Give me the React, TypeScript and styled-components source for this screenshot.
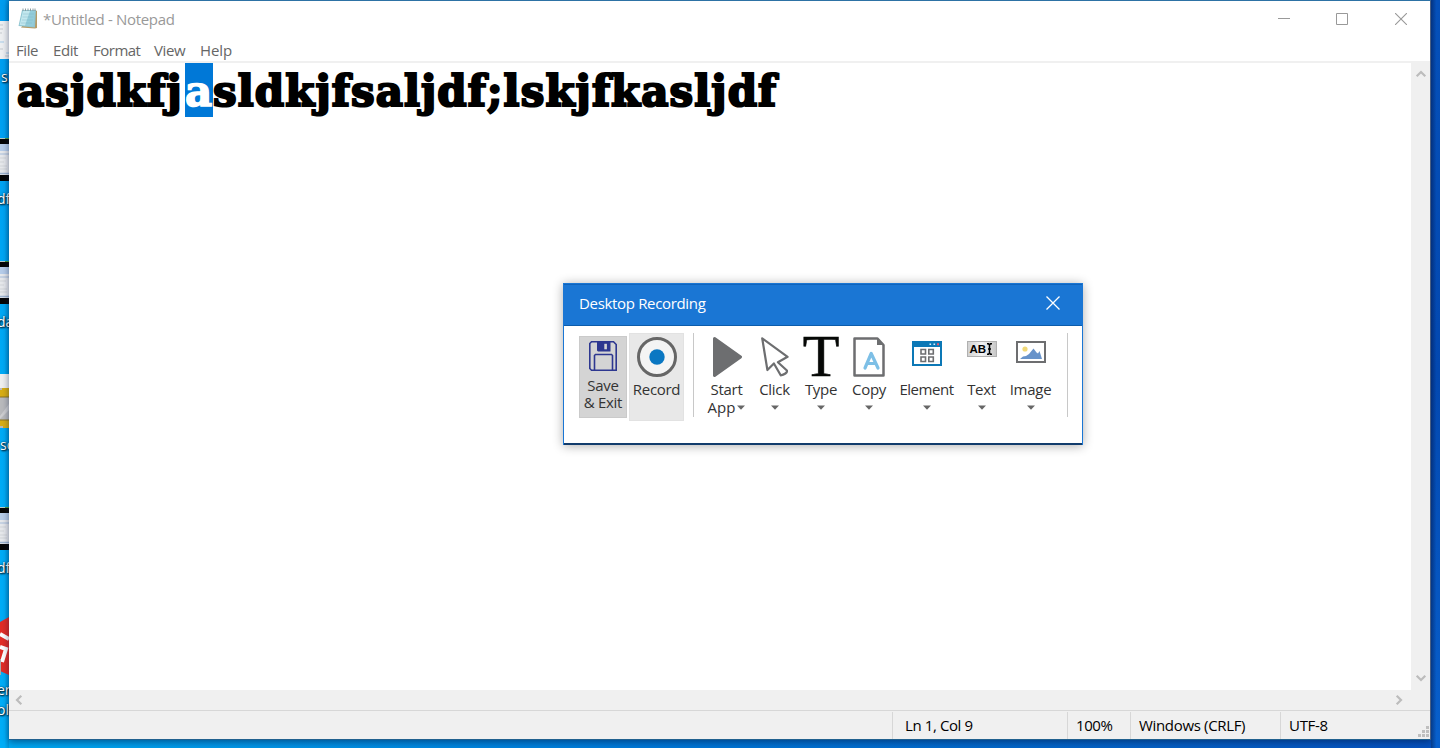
import React from "react";
import styled, { createGlobalStyle } from "styled-components";

const Global = createGlobalStyle`
  * { box-sizing: border-box; }
  body { margin: 0; overflow: hidden; font-family: "Open Sans", "Noto Sans", sans-serif; }
  svg { display: block; flex: none; }
`;

const Desktop = styled.div`
  position: relative;
  width: 1440px;
  height: 748px;
  display: grid;
  grid-template-columns: 9px 1422px 9px;
  overflow: hidden;
  background: linear-gradient(90deg, #00a8f0 0%, #0295e6 18%, #0078d7 45%, #0560c4 80%, #0550bd 100%);
`;

const IconStrip = styled.div`
  overflow: hidden;
  height: 748px;
  background: linear-gradient(90deg, transparent 50%, rgba(0, 50, 90, 0.2)), linear-gradient(#009df0, #00abf6 50%, #00aef8);
`;

const Shortcut = styled.div<{ $gap: number }>`
  margin-top: ${(p) => p.$gap}px;
  height: 70px;
  display: flex;
  flex-direction: column;
`;

const ShortcutName = styled.span<{ $top: number; $left?: number }>`
  margin: ${(p) => p.$top}px 0 0 ${(p) => p.$left ?? -3}px;
  font-size: 14px;
  line-height: 20px;
  white-space: nowrap;
  color: #fff;
  text-shadow: 1px 1px 2px #000, 0 0 2px #003050;
`;

const RightEdge = styled.div`
  height: 748px;
  background: linear-gradient(90deg, rgba(0, 15, 60, 0.45), transparent 60%), linear-gradient(#0550b9, #0348b0 50%, #0860cc);
`;

const Window = styled.div`
  height: 740px;
  display: flex;
  flex-direction: column;
  background: #fff;
  border-top: 1px solid #2d72a5;
  border-right: 1px solid #4c5f80;
  border-bottom: 1px solid #20608e;
  box-shadow: 0 2px 7px rgba(0, 20, 60, 0.5);
`;

const TitleBar = styled.div`
  height: 37px;
  display: flex;
  align-items: center;
  padding: 0 0 2px 9px;
`;

const Title = styled.span`
  margin-left: 5px;
  flex: 1;
  font-size: 15px;
  letter-spacing: -0.32px;
  color: #999;
`;

const Controls = styled.div`
  display: grid;
  grid-template-columns: 58px 59px 12px;
  padding-right: 23px;
`;

const MenuBar = styled.div`
  height: 25px;
  display: flex;
  gap: 14px;
  padding: 1px 0 0 7px;
  border-bottom: 2px solid #f0f0f0;
  font-size: 15px;
  line-height: 22px;
  color: #666;
`;

const MenuItem = styled.span<{ $w: number; $ls?: number }>`
  width: ${(p) => p.$w}px;
  letter-spacing: ${(p) => p.$ls ?? -0.4}px;
  white-space: nowrap;
`;

const Body = styled.div`
  flex: 1;
  display: grid;
  grid-template-columns: 1fr 19px;
`;

const Editor = styled.div`
  display: flex;
  align-items: flex-start;
  padding-left: 8px;
`;

const Run = styled.span<{ $w: number; $ls: number; $selected?: boolean }>`
  width: ${(p) => p.$w}px;
  height: 54px;
  font: bold 42px/58px "DejaVu Serif", serif;
  letter-spacing: ${(p) => p.$ls}px;
  white-space: nowrap;
  color: ${(p) => (p.$selected ? "#fff" : "#000")};
  background: ${(p) => (p.$selected ? "#0078d7" : "transparent")};
  -webkit-text-stroke: ${(p) => (p.$selected ? 1.5 : 2.2)}px currentColor;
`;

const VScroll = styled.div`
  display: flex;
  flex-direction: column;
  justify-content: space-between;
  align-items: center;
  padding: 7px 0 8px;
  background: #f0f0f0;
`;

const HScroll = styled.div`
  height: 20px;
  display: flex;
  justify-content: space-between;
  align-items: center;
  padding: 0 26px 1px 5px;
  background: #f0f0f0;
`;

const StatusBar = styled.div`
  height: 29px;
  display: flex;
  justify-content: flex-end;
  padding-top: 1px;
  background: #f0f0f0;
  border-top: 1px solid #d7d7d7;
`;

const StatusCell = styled.div<{ $w: number; $pad: number; $ls: number }>`
  width: ${(p) => p.$w}px;
  height: 27px;
  display: flex;
  justify-content: space-between;
  padding-left: ${(p) => p.$pad}px;
  border-left: 1px solid #d7d7d7;
  font-size: 15px;
  line-height: 26px;
  letter-spacing: ${(p) => p.$ls}px;
  white-space: nowrap;
  color: #000;
`;

const Grip = styled.div`
  align-self: flex-end;
  padding: 0 1px 2px 0;
`;

const Dialog = styled.div`
  position: absolute;
  left: 563px;
  top: 283px;
  width: 520px;
  height: 162px;
  background: #fff;
  border: 1px solid #1a76d4;
  border-bottom: 0;
  box-shadow: 0 1px 10px rgba(0, 0, 0, 0.32);
`;

const DialogHeader = styled.div`
  height: 42px;
  display: flex;
  justify-content: space-between;
  padding: 0 22px 0 15px;
  background: #1a76d4;
  border-top: 1px solid #0f63bb;
  border-bottom: 1px solid #0c5cab;
  color: #fff;
  font-size: 15px;
  line-height: 36px;
  letter-spacing: -0.33px;
`;

const CloseWrap = styled.div`
  padding-top: 11px;
`;

const Toolbar = styled.div`
  height: 119px;
  display: flex;
  align-items: flex-start;
  padding: 7px 0 0 15px;
  border-bottom: 2px solid #123c6c;
`;

const ToggleButton = styled.div<{ $w: number; $h: number; $top: number; $bg: string; $line: string }>`
  width: ${(p) => p.$w}px;
  height: ${(p) => p.$h}px;
  margin: ${(p) => p.$top}px 2px 0 0;
  display: flex;
  flex-direction: column;
  align-items: center;
  background: ${(p) => p.$bg};
  border: 1px solid ${(p) => p.$line};
`;

const Divider = styled.div<{ $l: number; $r: number }>`
  width: 1px;
  height: 84px;
  margin: 0 ${(p) => p.$r}px 0 ${(p) => p.$l}px;
  background: #c8c8c8;
`;

const Tool = styled.div<{ $w: number }>`
  width: ${(p) => p.$w}px;
  display: flex;
  flex-direction: column;
  align-items: center;
`;

const ToolIcon = styled.div<{ $h: number; $top: number }>`
  height: ${(p) => p.$h}px;
  padding-top: ${(p) => p.$top}px;
`;

const Label = styled.span<{ $ls?: number; $lh?: number }>`
  display: flex;
  align-items: center;
  gap: 2px;
  font-size: 15px;
  line-height: ${(p) => p.$lh ?? 18}px;
  height: ${(p) => p.$lh ?? 18}px;
  letter-spacing: ${(p) => p.$ls ?? -0.3}px;
  color: #333;
  white-space: nowrap;
`;

const TypeGlyph = styled.div`
  height: 47px;
  font: 60px/46px "Liberation Serif", serif;
  color: #060806;
  -webkit-text-stroke: 0.6px #060806;
`;

const Caret = () => (
  <svg width="8" height="5" viewBox="0 0 8 5"><path d="M0 0.500h8L4 4.800z" fill="#666" /></svg>
);

const Chevron = ({ dir }: { dir: "up" | "down" | "left" | "right" }) => {
  const turn = { up: 0, right: 90, down: 180, left: 270 }[dir];
  return (
    <svg width="10" height="8" viewBox="-5 -4 10 8" overflow="visible">
      <path d="M-4.300 2.300L0 -2L4.300 2.300" transform={`rotate(${turn})`} fill="none" stroke="#bcbcbc" strokeWidth="2.200" />
    </svg>
  );
};

const NotepadIcon = () => (
  <svg width="20" height="21" viewBox="0 0 20 21">
    <path d="M17 2l2 1v17l-2 0.500-14-1z" fill="#b59a66" />
    <path d="M4 2h14l-1 17.500L0.500 18z" fill="#8fc4d0" />
    <path d="M4.500 3h12.500l-1.500 15.500L1.500 17z" fill="#93ccda" />
    <path d="M5 3h7L7 17.500 1.700 17z" fill="#c2e7ee" />
    <path d="M5 6h11M4.500 9h11M4 12h11M3 15h11" stroke="#79b4c3" strokeWidth=".4" />
    <path d="M5 0.500v2.500M7.500 0.500v2.500M10 0.500v2.500M12.500 0.500v2.500M15 0.500v2.500M17 0.500v2.500" stroke="#8a9ca0" strokeWidth="1" />
  </svg>
);

const PageThumb = () => (
  <svg width="9" height="38" viewBox="0 0 9 38">
    <path d="M0 0h9v38H0z" fill="#eef0f2" />
    <path d="M0 4h3M0 8h3M0 12h2M0 28h3M5 35h4" stroke="#c5c9ce" />
    <path d="M0 21h4M6 32h3" stroke="#a6cbe8" />
  </svg>
);

const ScreenThumb = () => (
  <svg width="9" height="43" viewBox="0 0 9 43">
    <path d="M0 0h9v43H0z" fill="#050505" />
    <path d="M0 0h5v1H0z" fill="#b9c9c9" /><path d="M5 0h4v1H5z" fill="#4a9d3a" />
    <path d="M0 6h9v31H0z" fill="#e7e9ec" />
    <path d="M0 6h9v7H0z" fill="#b6cdea" />
    <path d="M0 16h9" stroke="#a8bedb" />
    <path d="M0 20h6M0 24h4M0 28h7M0 31h7" stroke="#d2d5d9" />
    <path d="M0 35.500h9" stroke="#9cb3d0" strokeWidth="1.500" />
  </svg>
);

const ArchiveThumb = () => (
  <svg width="9" height="54" viewBox="0 0 9 54">
    <path d="M0 0h9v54H0z" fill="#b9babd" />
    <path d="M0 0h9v14H0z" fill="#f0f0f0" />
    <path d="M0 16h2v-2h7v9H0zM0 46h9v8H3v-2H0z" fill="#d8ae14" />
    <path d="M0 23h9M0 46h9" stroke="#8d7420" />
    <path d="M0 42L9 30v6l-9 9z" fill="#cfcfd1" />
  </svg>
);

const RedThumb = () => (
  <svg width="9" height="58" viewBox="0 0 9 58">
    <path d="M9 0L0 5v49l9 4z" fill="#e12d27" />
    <path d="M0 17l9 5M0 30l6 2-4 13" stroke="#fff" strokeWidth="4" fill="none" />
    <path d="M0 42h1v16H0z" fill="#aaa" />
  </svg>
);

const FloppyIcon = () => (
  <svg width="28" height="30" viewBox="0 0 28 30" fill="none" stroke="#2d3790" strokeWidth="1.600">
    <path d="M2.500 0.800H24.500L27.200 3.500V29.200H2.500L0.800 27.500V2.500z" />
    <path d="M5.500 29V14.500l1-1h16l1 1V29" />
    <path d="M8 0.800h13.500V10.500H9L8 9.500z" fill="#2d3790" stroke="none" />
    <path d="M15.300 2.800h2.600v5.500h-2.600z" fill="#d4d4d4" stroke="none" />
  </svg>
);

const RecordIcon = () => (
  <svg width="40" height="40" viewBox="0 0 40 40">
    <circle cx="20" cy="20" r="18.500" fill="#f4f4f4" stroke="#666" strokeWidth="3" />
    <circle cx="20" cy="20" r="7.700" fill="#0a77c2" />
  </svg>
);

const PlayIcon = () => (
  <svg width="30" height="40" viewBox="0 0 30 40">
    <path d="M2.500 1.500L28.500 20L2.500 38.500z" fill="#6d6e70" stroke="#6d6e70" strokeWidth="3" strokeLinejoin="round" />
  </svg>
);

const CursorIcon = () => (
  <svg width="28" height="40" viewBox="0 0 28 40">
    <path d="M1.200 1.300L26.600 19.800L16.900 25.200L25.900 33.500Q26.400 35 24.400 36.500T19.700 38.300L12.900 26.500L6.400 33z" fill="#fff" stroke="#6d6e70" strokeWidth="2.200" strokeLinejoin="round" />
  </svg>
);

const CopyIcon = () => (
  <svg width="32" height="40" viewBox="0 0 32 40">
    <path d="M1.500 1.500h23L30.500 8v30.500h-29z" fill="#fff" stroke="#6d6e70" strokeWidth="2.500" strokeLinejoin="round" />
    <path d="M24 1v7h7z" fill="#6d6e70" />
    <path d="M12 31L18.200 16.500L25 31M14 26.500h9" fill="none" stroke="#7dbfe6" strokeWidth="3.200" strokeLinecap="round" strokeLinejoin="round" />
  </svg>
);

const ElementIcon = () => (
  <svg width="30" height="25" viewBox="0 0 30 25">
    <path d="M1 1h28v23H1z" fill="#fff" stroke="#0c78b6" strokeWidth="2" />
    <path d="M0 0h30v6H0z" fill="#0c78b6" />
    <path d="M17.500 2.500h1.600v1.600h-1.600zM21.500 2.500h1.600v1.600h-1.600z" fill="#d8efff" />
    <path d="M25 2.200h2v2h-2z" fill="#f0556a" />
    <path d="M9 8.500h4.500v4.500H9zM16.800 8.500h4.500v4.500h-4.500zM9 16h4.500v4.500H9zM16.800 16h4.500v4.500h-4.500z" fill="none" stroke="#6d6e70" strokeWidth="1.600" />
  </svg>
);

const FieldBox = styled.div`
  width: 30px;
  height: 16px;
  display: flex;
  align-items: center;
  padding: 0 1px 0 2px;
  border: 1px solid #b0b0b0;
  background: linear-gradient(90deg, #d2d2d2, #f3f3f3 50%, #c8c8c8);
  font: bold 11.500px/12px "Liberation Sans", sans-serif;
  color: #000;
`;

const IBeam = () => (
  <svg width="7" height="12" viewBox="0 0 7 12">
    <path d="M1 0.800h1.500L3.500 2L4.500 0.800H6M1 11.200h1.500L3.500 10L4.500 11.200H6M3.500 2v8M2 6h3" fill="none" stroke="#000" strokeWidth="1.500" />
  </svg>
);

const ImageIcon = () => (
  <svg width="30" height="22" viewBox="0 0 30 22">
    <path d="M1 1h28v20H1z" fill="#fff" stroke="#6d6e70" strokeWidth="2" />
    <circle cx="9" cy="8" r="2.600" fill="#f0d878" />
    <path d="M4 18l3-2.500 3-0.500 3-2 4.500-5.500 3 4 1.500 1 1.500-2.500L26 18z" fill="#6793ca" />
  </svg>
);

const tools = [
  { name: "Click", w: 48, icon: <CursorIcon />, top: 4, ls: -0.3 },
  { name: "Type", w: 46, icon: <TypeGlyph>T</TypeGlyph>, top: 0, ls: -0.3 },
  { name: "Copy", w: 50, icon: <CopyIcon />, top: 4, ls: -0.3 },
  { name: "Element", w: 65, icon: <ElementIcon />, top: 8, ls: -0.45 },
  { name: "Text", w: 45, icon: <FieldBox>AB<IBeam /></FieldBox>, top: 8, ls: -0.3 },
  { name: "Image", w: 53, icon: <ImageIcon />, top: 8, ls: -0.25 },
];

export default function App() {
  return (
    <>
      <Global />
      <Desktop>
        <IconStrip>
          <Shortcut $gap={21}><PageThumb /><ShortcutName $top={8} $left={1}>si</ShortcutName></Shortcut>
          <Shortcut $gap={47}><ScreenThumb /><ShortcutName $top={8}>df</ShortcutName></Shortcut>
          <Shortcut $gap={53}><ScreenThumb /><ShortcutName $top={8}>da</ShortcutName></Shortcut>
          <Shortcut $gap={43}><ArchiveThumb /><ShortcutName $top={7} $left={0}>so</ShortcutName></Shortcut>
          <Shortcut $gap={63}><ScreenThumb /><ShortcutName $top={8}>df</ShortcutName></Shortcut>
          <Shortcut $gap={40}>
            <RedThumb />
            <ShortcutName $top={5}>er</ShortcutName>
            <ShortcutName $top={0}>ol</ShortcutName>
          </Shortcut>
        </IconStrip>
        <Window>
          <TitleBar>
            <NotepadIcon />
            <Title>*Untitled - Notepad</Title>
            <Controls>
              <svg width="12" height="12"><path d="M0 5.500h12" stroke="#999" /></svg>
              <svg width="12" height="12"><path d="M.5 .5h11v11H.5z" stroke="#999" fill="none" /></svg>
              <svg width="12" height="12"><path d="M0 0l12 12M12 0L0 12" stroke="#999" strokeWidth="1.100" /></svg>
            </Controls>
          </TitleBar>
          <MenuBar>
            <MenuItem $w={23}>File</MenuItem>
            <MenuItem $w={26}>Edit</MenuItem>
            <MenuItem $w={47} $ls={-0.5}>Format</MenuItem>
            <MenuItem $w={32}>View</MenuItem>
            <MenuItem $w={32} $ls={-0.1}>Help</MenuItem>
          </MenuBar>
          <Body>
            <Editor>
              <Run $w={168} $ls={1.15}>asjdkfj</Run>
              <Run $w={28} $ls={0} $selected>a</Run>
              <Run $w={566} $ls={1.1}>sldkjfsaljdf;lskjfkasljdf</Run>
            </Editor>
            <VScroll><Chevron dir="up" /><Chevron dir="down" /></VScroll>
          </Body>
          <HScroll><Chevron dir="left" /><Chevron dir="right" /></HScroll>
          <StatusBar>
            <StatusCell $w={175} $pad={12} $ls={-0.4}>Ln 1, Col 9</StatusCell>
            <StatusCell $w={63} $pad={8} $ls={-0.4}>100%</StatusCell>
            <StatusCell $w={150} $pad={8} $ls={-0.33}>Windows (CRLF)</StatusCell>
            <StatusCell $w={150} $pad={8} $ls={-0.3}>
              UTF-8
              <Grip>
                <svg width="11" height="11" viewBox="0 0 11 11">
                  <path d="M8 0h3v3H8zM4 4h3v3H4zM8 4h3v3H8zM0 8h3v3H0zM4 8h3v3H4zM8 8h3v3H8z" fill="#bfbfbf" />
                </svg>
              </Grip>
            </StatusCell>
          </StatusBar>
        </Window>
        <RightEdge />
        <Dialog>
          <DialogHeader>
            Desktop Recording
            <CloseWrap>
              <svg width="14" height="14"><path d="M.5 .5l13 13M13.500 .5l-13 13" stroke="#fff" strokeWidth="1.300" /></svg>
            </CloseWrap>
          </DialogHeader>
          <Toolbar>
            <ToggleButton $w={48} $h={82} $top={3} $bg="#d4d4d4" $line="#cacaca">
              <ToolIcon $h={40} $top={4}><FloppyIcon /></ToolIcon>
              <Label $lh={17}>Save</Label>
              <Label $lh={17}>&amp; Exit</Label>
            </ToggleButton>
            <ToggleButton $w={55} $h={88} $top={0} $bg="#e8e8e8" $line="#e2e2e2">
              <ToolIcon $h={46} $top={3}><RecordIcon /></ToolIcon>
              <Label>Record</Label>
            </ToggleButton>
            <Divider $l={7} $r={8} />
            <Tool $w={49}>
              <ToolIcon $h={47} $top={4}><PlayIcon /></ToolIcon>
              <Label>Start</Label>
              <Label $ls={0}>App<Caret /></Label>
            </Tool>
            {tools.map((t) => (
              <Tool key={t.name} $w={t.name === "Click" ? t.w - 1 : t.w}>
                <ToolIcon $h={47} $top={t.top}>{t.icon}</ToolIcon>
                <Label $ls={t.ls}>{t.name}</Label>
                <Label><Caret /></Label>
              </Tool>
            ))}
            <Divider $l={10} $r={0} />
          </Toolbar>
        </Dialog>
      </Desktop>
    </>
  );
}
